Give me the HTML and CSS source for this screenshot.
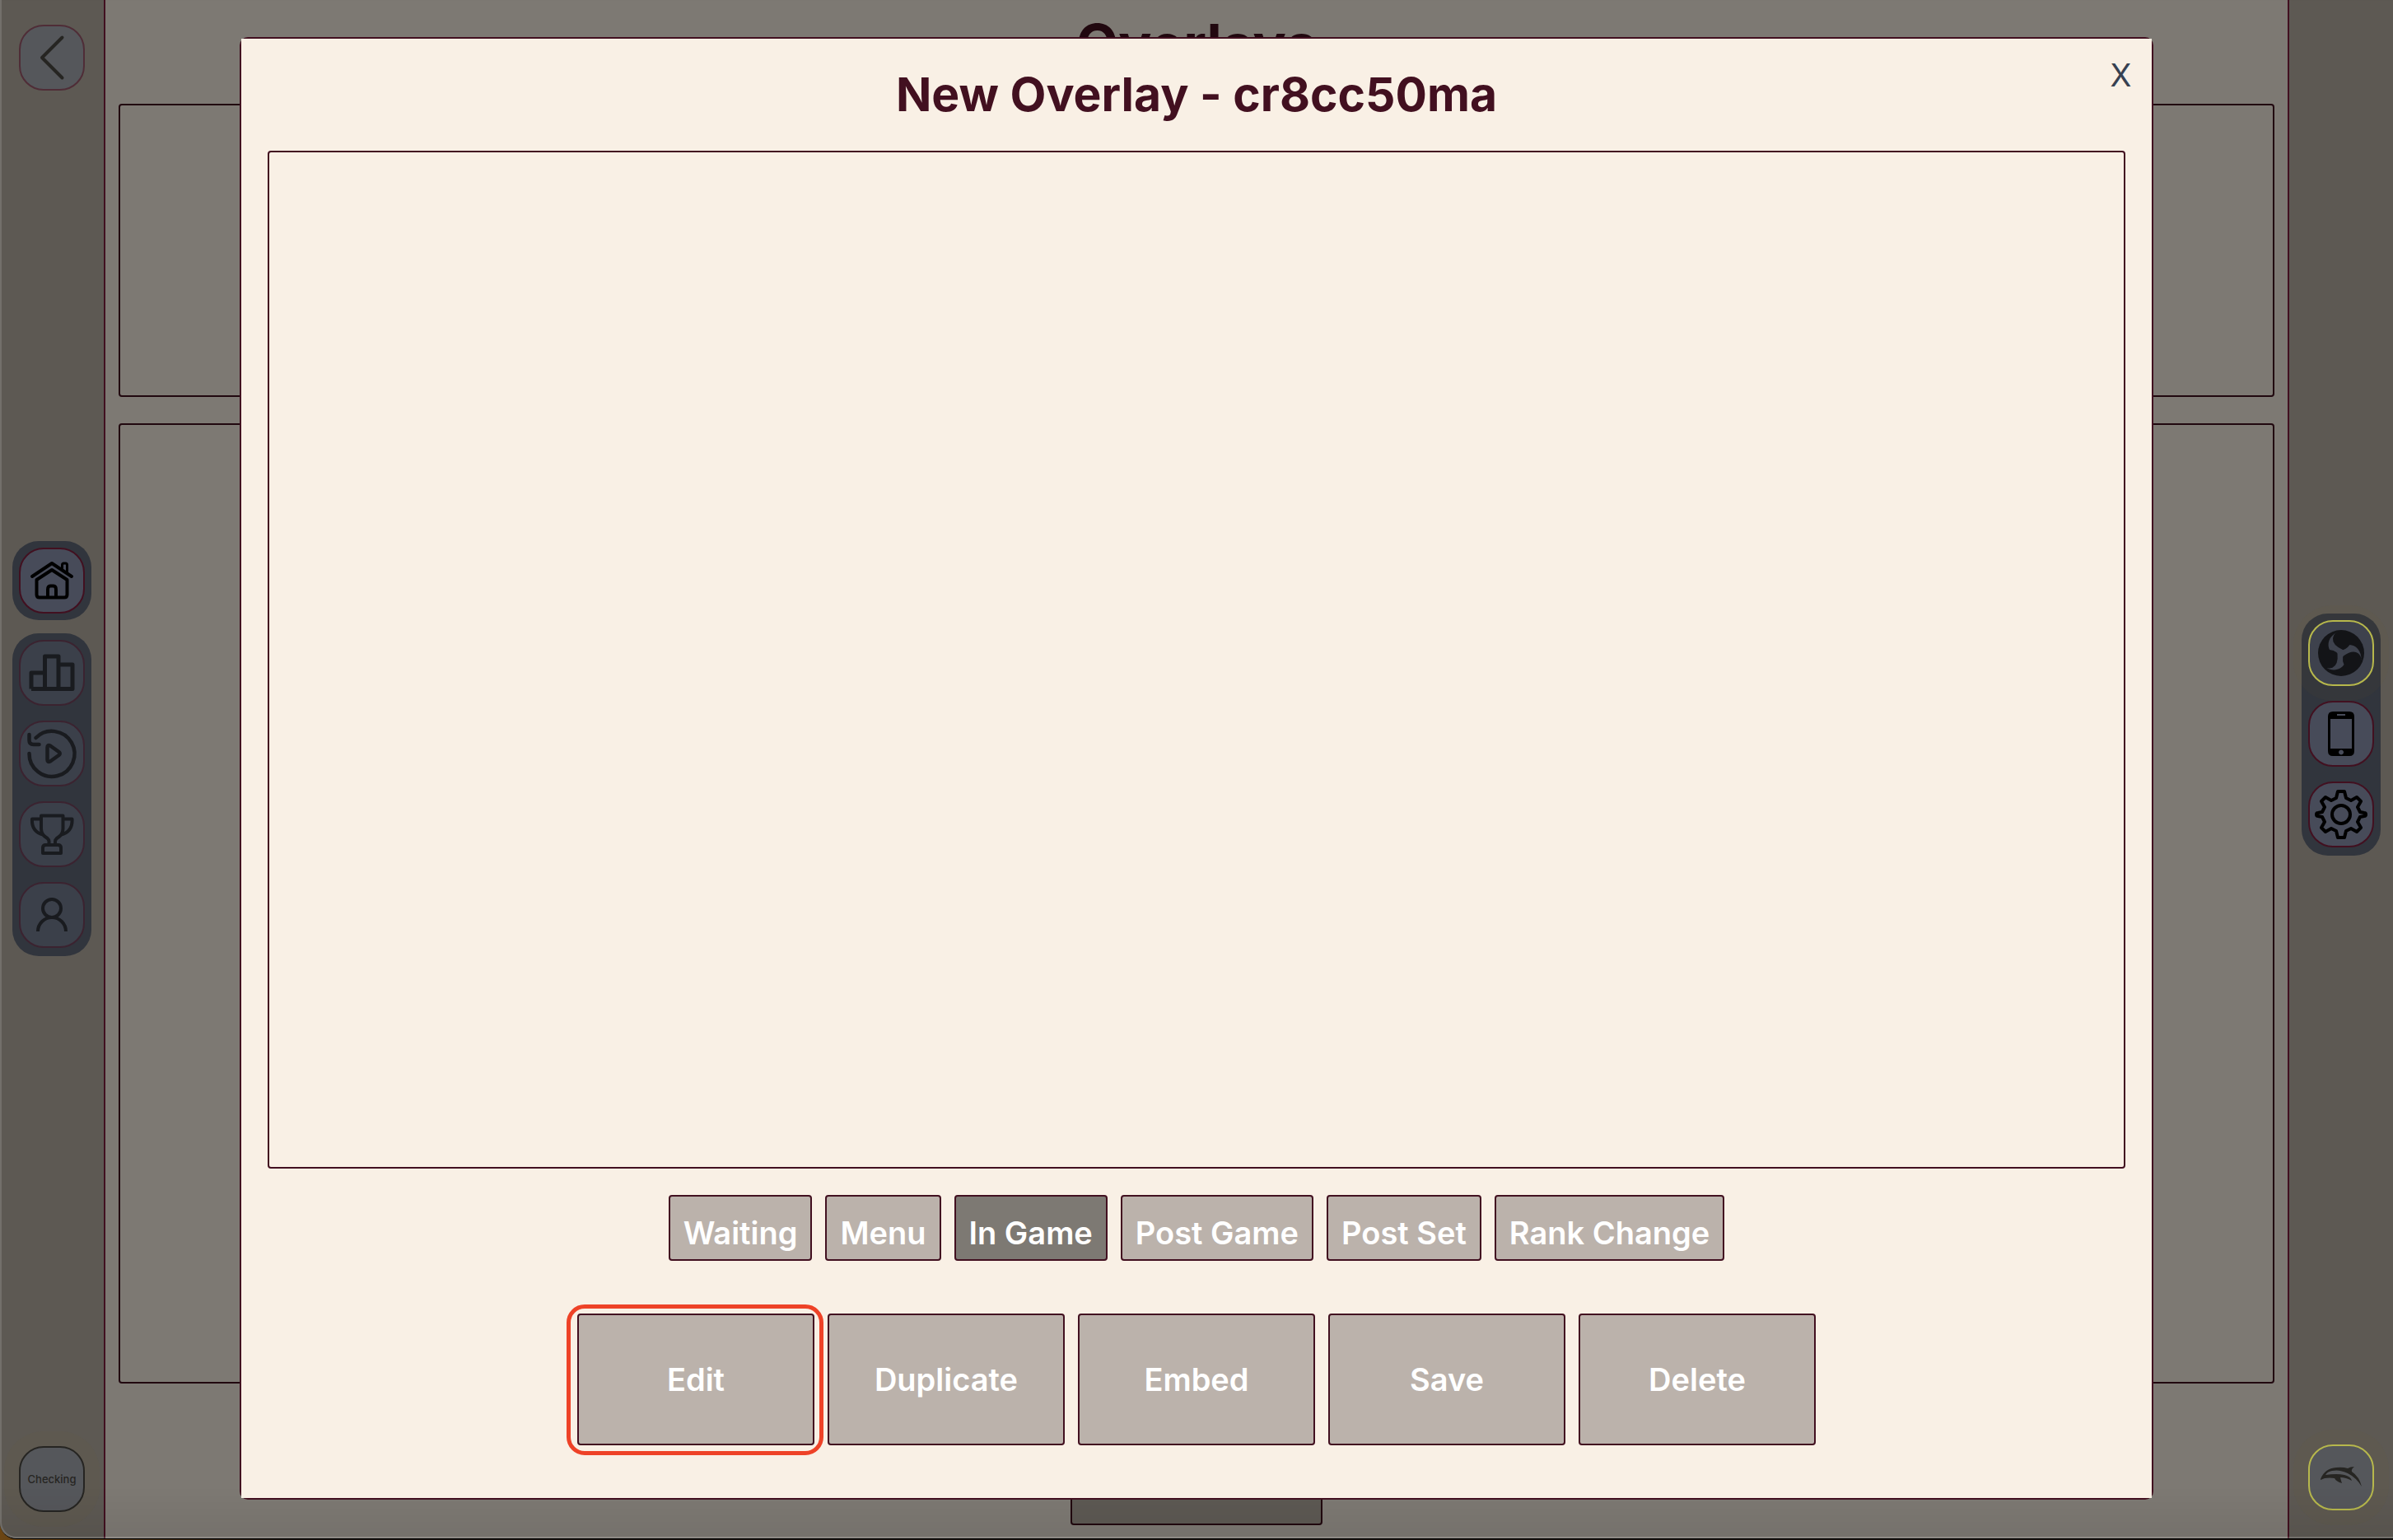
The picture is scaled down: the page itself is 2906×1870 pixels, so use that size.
FILE: index.html
```html
<!DOCTYPE html>
<html lang="en">
<head>
  <meta charset="utf-8">
  <title>Overlays</title>
  <link rel="stylesheet" href="styles.css">
</head>
<body>
  <div class="app">
    <nav class="rail rail-left" aria-label="Main">
      <button class="icon-btn faded" type="button" aria-label="Back">
        <svg viewBox="0 0 76 76" fill="none" stroke="currentColor" stroke-width="4" stroke-linecap="round" stroke-linejoin="round"><path d="M50.500 13.500 26 38l24.500 24.500"/></svg>
      </button>
      <div class="groups">
        <div class="group">
          <button class="icon-btn" type="button" aria-label="Home">
            <svg viewBox="0 0 76 76" fill="none" stroke="currentColor" stroke-width="4" stroke-linecap="round" stroke-linejoin="round"><path d="M14 33 38 17 62 33M38 25 19.500 37V55q0 3.500 3.500 3.500h30q3.500 0 3.500-3.500V37ZM33 58V49q0-4.500 3-4.500h4q3 0 3 4.500v9"/><path stroke-width="3" d="M50.500 24V19q0-2 2-2h2q2 0 2 2V28"/></svg>
          </button>
        </div>
        <div class="group group-long">
          <button class="icon-btn dim" type="button" aria-label="Statistics">
            <svg viewBox="0 0 76 76" fill="none" stroke="currentColor" stroke-width="5" stroke-linejoin="round"><path d="M13 57.500V38H29.500M29.500 57.500V18H46V57.500M46 28H63V57.500H13"/></svg>
          </button>
          <button class="icon-btn dim" type="button" aria-label="Replays">
            <svg viewBox="0 0 76 76" fill="none" stroke="currentColor" stroke-width="4.500" stroke-linecap="round" stroke-linejoin="round"><path d="M18.500 19A27.500 27.500 0 1 1 10.500 38M10.500 15v7q0 5 5 5h7"/><path d="M32.500 30.500v15q0 3.500 3.500 2l10.500-7.500q2.500-2 0-4L36 28.500q-3.500-1.500-3.500 2Z"/></svg>
          </button>
          <button class="icon-btn dim" type="button" aria-label="Tournaments">
            <svg viewBox="0 0 76 76" fill="none" stroke="currentColor" stroke-width="4" stroke-linejoin="round"><path d="M25 15.500H51.500V31q0 7-5.500 10.500-4 2.500-4 5V51H34.500V46.500q0-2.500-4-5Q25 38 25 31ZM25 19.500H14q-1 15 13 19M51.500 19.500h11q1 15-13 19M27 61V54.500q0-3.500 3.500-3.500h15q3.500 0 3.500 3.500V61Z"/></svg>
          </button>
          <button class="icon-btn dim" type="button" aria-label="Profile">
            <svg viewBox="0 0 76 76" fill="none" stroke="currentColor" stroke-width="4"><circle cx="38" cy="30" r="11"/><path d="M21 58a17 17 0 0 1 34 0"/></svg>
          </button>
        </div>
      </div>
      <button class="icon-btn faded glow checking" type="button">Checking</button>
    </nav>

    <main class="page">
      <h1 class="page-title">Overlays</h1>
      <section class="box box-top"></section>
      <section class="box box-list"></section>
      <button class="create" type="button" aria-label="Create overlay"></button>
    </main>

    <nav class="rail rail-right" aria-label="Connections">
      <div class="group group-long">
        <button class="icon-btn glow live half" type="button" aria-label="OBS">
          <svg viewBox="0 0 76 76"><circle cx="38" cy="38" r="28" fill="currentColor"/><g class="swirl"><path id="arm" d="M34 12C22 18 21 28 24 34Q34 35 37 44 42 41 40 34 27 28 28 20 29 14 34 12Z"/><use href="#arm" transform="rotate(120 38 38)"/><use href="#arm" transform="rotate(240 38 38)"/></g></svg>
        </button>
        <button class="icon-btn" type="button" aria-label="Phone">
          <svg viewBox="0 0 76 76"><path fill="currentColor" fill-rule="evenodd" d="M28 11H48q6 0 6 6V59q0 6-6 6H28q-6 0-6-6V17q0-6 6-6ZM25 20V56H51V20ZM33 14v2H43v-2ZM38 57.500a3 3 0 1 0 .1 0Z"/></svg>
        </button>
        <button class="icon-btn" type="button" aria-label="Settings">
          <svg viewBox="0 0 76 76" fill="none" stroke="currentColor" stroke-width="4" stroke-linejoin="round"><circle cx="38" cy="38" r="11"/><path d="M34 10h8l2 8 6 3 7-4 5 5-4 7 3 6 5 1q2 0 2 2t-2 2l-5 1-3 6 4 7-5 5-7-4-6 3-2 8h-8l-2-8-6-3-7 4-5-5 4-7-3-6-5-1q-2 0-2-2t2-2l5-1 3-6-4-7 5-5 7 4 6-3Z"/></svg>
        </button>
      </div>
      <button class="icon-btn faded glow live" type="button" aria-label="Dolphin">
        <svg viewBox="0 0 76 76" fill="currentColor"><path d="M13 40Q18 27 32 26q8-1 14 1 3-2 8-2-4 3-3 6 9 6 12 18Q56 38 46 33 36 28 27 30q-6 1-8 5 14-2 23 0 8 2 9 7-7-4-14-4l1 4 1 3q-7-2-9-6-6-1-12 0l-5 2Z"/></svg>
      </button>
    </nav>
  </div>

  <div class="backdrop">
    <div class="modal" role="dialog" aria-labelledby="modal-title">
      <div class="modal-body">
        <button class="close" type="button">X</button>
        <h2 class="modal-title" id="modal-title">New Overlay - cr8cc50ma</h2>
        <div class="canvas"></div>
        <div class="row tabs">
          <button class="tab" type="button">Waiting</button>
          <button class="tab" type="button">Menu</button>
          <button class="tab active" type="button">In Game</button>
          <button class="tab" type="button">Post Game</button>
          <button class="tab" type="button">Post Set</button>
          <button class="tab" type="button">Rank Change</button>
        </div>
        <div class="row actions">
          <button class="action highlighted" type="button">Edit</button>
          <button class="action" type="button">Duplicate</button>
          <button class="action" type="button">Embed</button>
          <button class="action" type="button">Save</button>
          <button class="action" type="button">Delete</button>
        </div>
      </div>
    </div>
  </div>
</body>
</html>
```
FILE: styles.css
```css
* {
  box-sizing: border-box;
}

body {
  margin: 0;
  height: 100vh;
  overflow: hidden;
  font-family: Inter, "Liberation Sans", sans-serif;
  background: linear-gradient(90deg, #6b4513, #1c1410 12%);
}

button {
  margin: 0;
  padding: 0;
  font: inherit;
  cursor: pointer;
}

.app {
  position: relative;
  display: flex;
  height: calc(100vh - 1px);
  overflow: hidden;
  background: #7d7973;
  border-bottom: 1px solid #000;
  border-bottom-left-radius: 20px;
}

/* light edge of the window */
.app::after {
  content: "";
  position: absolute;
  inset: 0;
  border: solid rgba(255, 255, 255, 0.14);
  border-width: 0 0 2px 2px;
  border-bottom-left-radius: 20px;
  background: linear-gradient(0deg, rgba(0, 0, 0, 0.06), transparent 60px);
  pointer-events: none;
}

.rail {
  display: flex;
  flex: none;
  flex-direction: column;
  align-items: center;
  width: 128px;
  background: #5d5953;
}

.rail-left {
  justify-content: space-between;
  padding: 30px 0 32px;
  border-right: 2px solid #421020;
}

.rail-right {
  padding: 30px 0 34px;
  border-left: 2px solid #421020;
}

.rail-right .group {
  margin: auto 0;
}

.groups {
  display: flex;
  flex-direction: column;
  gap: 16px;
  margin-bottom: 48px;
}

.group {
  display: flex;
  flex-direction: column;
  gap: 18px;
  padding: 8px;
  border-radius: 32px;
  background: #31353d;
}

.group-long {
  padding-bottom: 10px;
}

.icon-btn {
  width: 80px;
  height: 80px;
  border: 2px solid #421020;
  border-radius: 30px;
  background: #474b59;
  color: #000;
}

.icon-btn svg {
  display: block;
  width: 76px;
  height: 76px;
}

.faded {
  background: #55575b;
  border-color: #4f2d37;
  color: #262522;
}

.dim {
  background: #3b404a;
  border-color: #3b2330;
  color: #191b1f;
}

.half {
  background: #3e424d;
  color: #131417;
}

.swirl {
  fill: #3e424d;
}

.glow {
  box-shadow: 0 0 0 18px rgba(120, 110, 30, 0.06);
}

.live {
  border-color: #b7b84c;
}

.checking {
  border-color: #262522;
  font-size: 13px;
  font-weight: 500;
}

.page {
  display: flex;
  flex: 1;
  flex-direction: column;
  align-items: center;
  padding: 16px;
  color: #21080f;
}

.page-title {
  margin: 0 0 34px;
  font-size: 67px;
  font-weight: 700;
  line-height: 76px;
}

.box {
  align-self: stretch;
  border: 2px solid #21080f;
  border-radius: 4px;
}

.box-top {
  flex: 0 0 356px;
}

.box-list {
  flex: 1;
  margin: 32px 0;
}

.create {
  width: 306px;
  height: 140px;
  border: 2px solid #21080f;
  border-radius: 4px;
  background: #5d5953;
}

.backdrop {
  position: fixed;
  inset: 0;
  display: flex;
  align-items: center;
  justify-content: center;
  padding-bottom: 4px;
}

.modal {
  display: flex;
  width: 80vw;
  height: 95vh;
  border: 2px solid #421020;
  border-radius: 10px;
}

.modal-body {
  position: relative;
  display: flex;
  flex: 1;
  flex-direction: column;
  padding: 32px;
  background: #f9f0e5;
  color: #421020;
}

.modal-title {
  margin: 0 0 32px;
  font-size: 57px;
  font-weight: 700;
  line-height: 72px;
  text-align: center;
}

.close {
  position: absolute;
  top: 18px;
  right: 16px;
  width: 44px;
  border: 0;
  background: none;
  color: #374151;
  font-size: 38px;
  line-height: 52px;
}

.canvas {
  flex: 1;
  border: 2px solid #421020;
  border-radius: 4px;
}

.row {
  display: flex;
  justify-content: center;
  gap: 16px;
}

.tabs {
  margin: 32px 0 64px;
}

.tab,
.action {
  border: 2px solid #421020;
  border-radius: 4px;
  background: #bbb2ab;
  color: #fff;
  font-size: 38px;
  font-weight: 600;
}

.tab {
  height: 80px;
  padding: 12px 16px 0;
}

.active {
  background: #7d7973;
}

.actions {
  padding-bottom: 32px;
}

.action {
  position: relative;
  width: 288px;
  height: 160px;
}

.highlighted::after {
  content: "";
  position: absolute;
  inset: -13px -13px -14px -15px;
  border: 5px solid #ee4227;
  border-radius: 22px;
}
```
